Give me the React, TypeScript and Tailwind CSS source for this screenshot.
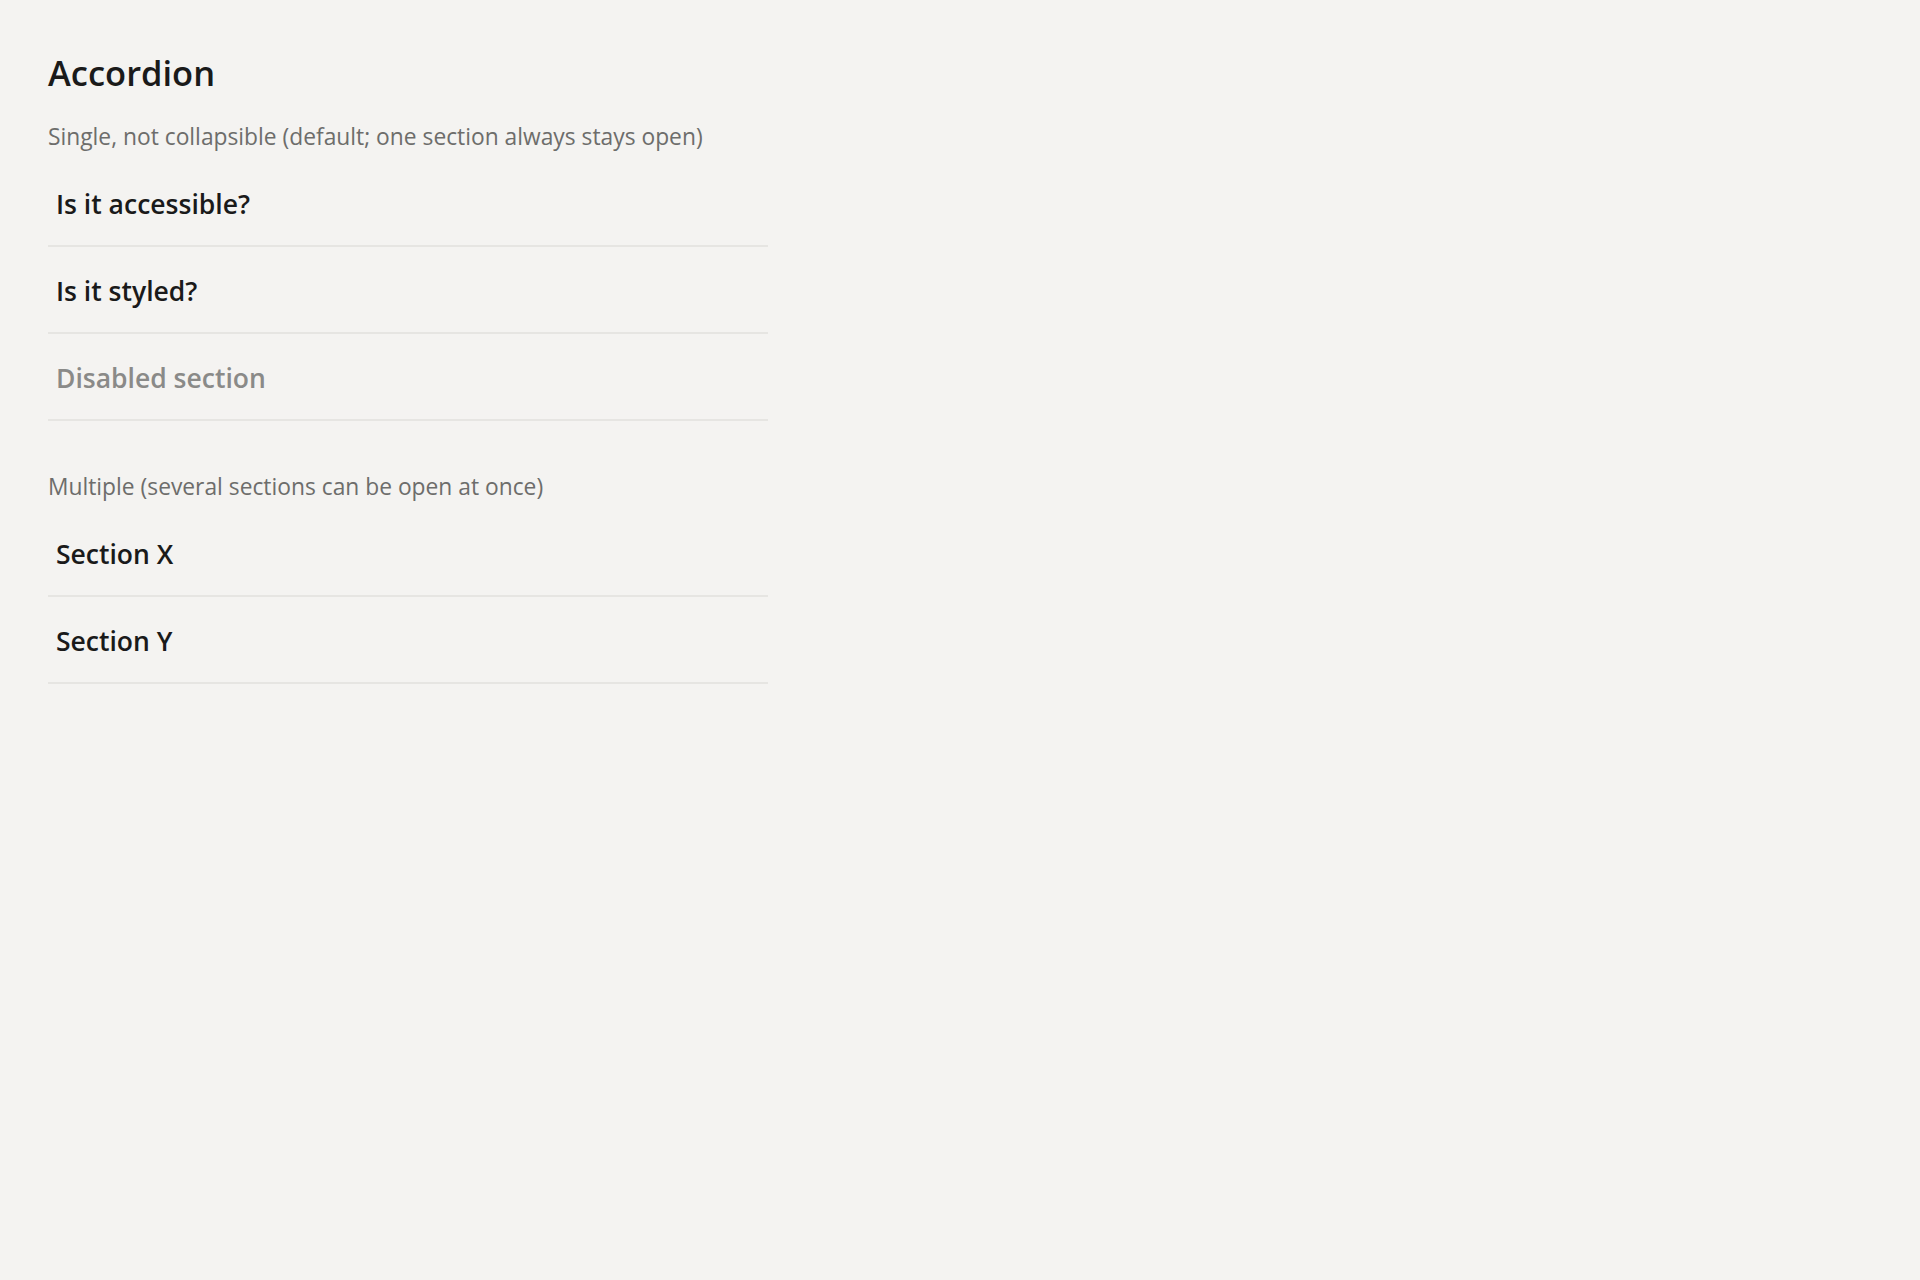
import React from "react";

type Item = { label: string; disabled?: boolean };

function AccordionGroup({ items }: { items: Item[] }) {
  return (
    <div className="w-[720px] flex flex-col">
      {items.map((it) => (
        <div key={it.label} className="border-b-2 border-[#e6e5e2]">
          <button
            type="button"
            disabled={it.disabled}
            className={
              "flex h-[85px] w-full items-center pl-[8px] pt-[3px] text-left text-[26.5px] font-semibold leading-[36px] " +
              (it.disabled ? "text-[#8a8a88] cursor-not-allowed" : "text-[#1a1a1a]")
            }
          >
            {it.label}
          </button>
        </div>
      ))}
    </div>
  );
}

export default function App() {
  return (
    <div
      className="min-h-screen bg-[#f4f3f1] px-[48px] pt-[51px]"
      style={{ fontFamily: '"Open Sans", "Noto Sans", sans-serif' }}
    >
      <h1 className="text-[34.5px] font-semibold leading-[44px] text-[#1a1a1a]">Accordion</h1>

      <section className="mt-[26px]">
        <p className="text-[22.8px] leading-[32px] text-[#6d6d6b]">
          Single, not collapsible (default; one section always stays open)
        </p>
        <div className="mt-[7px]">
          <AccordionGroup
            items={[
              { label: "Is it accessible?" },
              { label: "Is it styled?" },
              { label: "Disabled section", disabled: true },
            ]}
          />
        </div>
      </section>

      <section className="mt-[50px]">
        <p className="text-[22.8px] leading-[32px] text-[#6d6d6b]">
          Multiple (several sections can be open at once)
        </p>
        <div className="mt-[7px]">
          <AccordionGroup items={[{ label: "Section X" }, { label: "Section Y" }]} />
        </div>
      </section>
    </div>
  );
}
